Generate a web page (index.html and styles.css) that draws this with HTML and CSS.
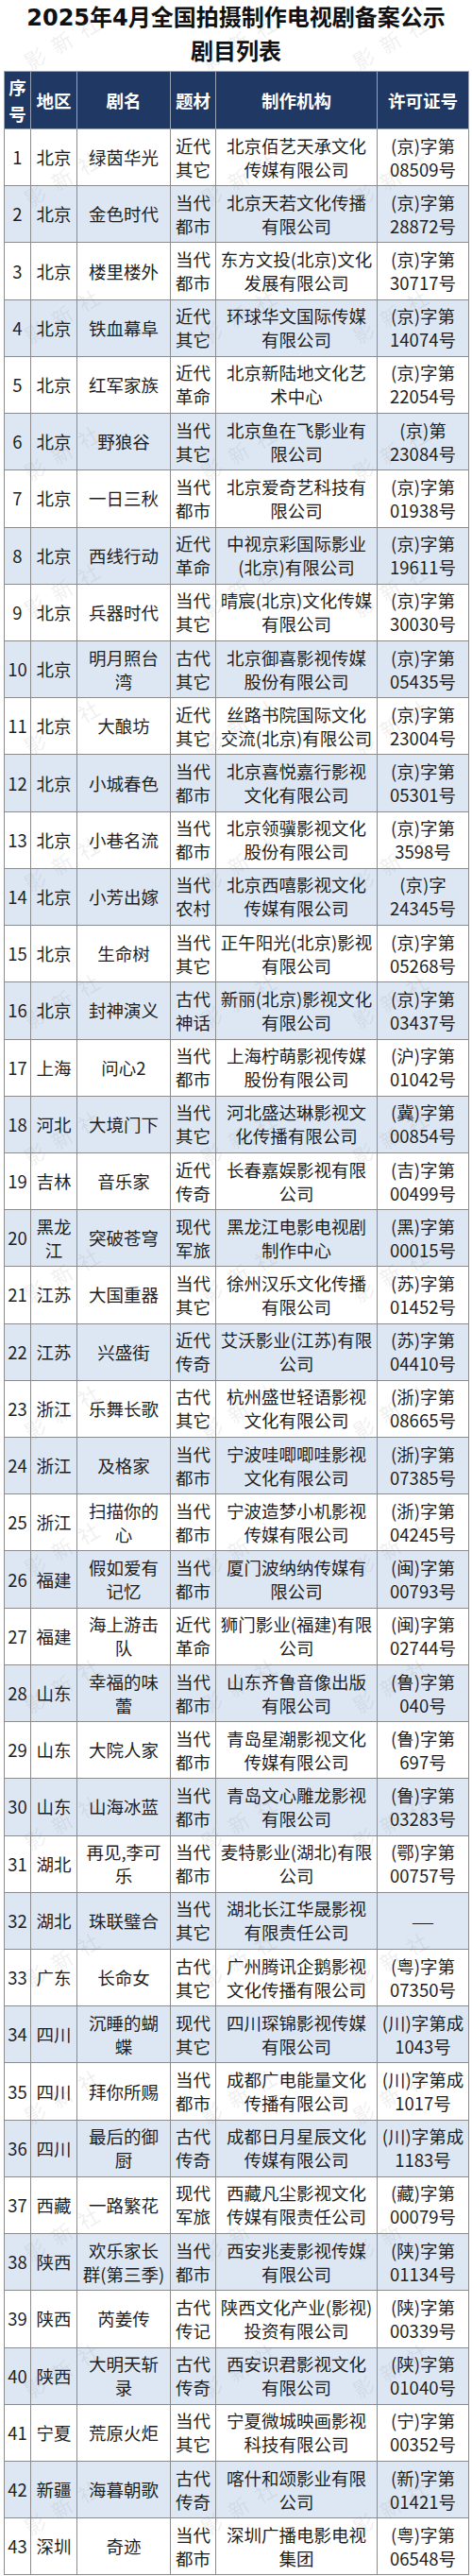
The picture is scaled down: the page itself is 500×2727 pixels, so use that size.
FILE: index.html
```html
<!DOCTYPE html>
<html lang="zh-CN">
<head>
<meta charset="utf-8">
<title>2025年4月全国拍摄制作电视剧备案公示剧目列表</title>
<link rel="stylesheet" href="styles.css">
</head>
<body>
<div class="page">
  <h1 class="title"><span class="num">2025</span>年<span class="num">4</span>月全国拍摄制作电视剧备案公示<br>剧目列表</h1>
  <table class="list">
    <colgroup>
      <col class="c-no"><col class="c-area"><col class="c-name"><col class="c-type"><col class="c-org"><col class="c-lic">
    </colgroup>
    <thead>
      <tr><th>序<br>号</th><th>地区</th><th>剧名</th><th>题材</th><th>制作机构</th><th>许可证号</th></tr>
    </thead>
    <tbody>
      <tr><td>1</td><td>北京</td><td>绿茵华光</td><td>近代<br>其它</td><td>北京佰艺天承文化<br>传媒有限公司</td><td>(京)字第<br>08509号</td></tr>
      <tr><td>2</td><td>北京</td><td>金色时代</td><td>当代<br>都市</td><td>北京天若文化传播<br>有限公司</td><td>(京)字第<br>28872号</td></tr>
      <tr><td>3</td><td>北京</td><td>楼里楼外</td><td>当代<br>都市</td><td>东方文投(北京)文化<br>发展有限公司</td><td>(京)字第<br>30717号</td></tr>
      <tr><td>4</td><td>北京</td><td>铁血幕阜</td><td>近代<br>其它</td><td>环球华文国际传媒<br>有限公司</td><td>(京)字第<br>14074号</td></tr>
      <tr><td>5</td><td>北京</td><td>红军家族</td><td>近代<br>革命</td><td>北京新陆地文化艺<br>术中心</td><td>(京)字第<br>22054号</td></tr>
      <tr><td>6</td><td>北京</td><td>野狼谷</td><td>当代<br>其它</td><td>北京鱼在飞影业有<br>限公司</td><td>(京)第<br>23084号</td></tr>
      <tr><td>7</td><td>北京</td><td>一日三秋</td><td>当代<br>都市</td><td>北京爱奇艺科技有<br>限公司</td><td>(京)字第<br>01938号</td></tr>
      <tr><td>8</td><td>北京</td><td>西线行动</td><td>近代<br>革命</td><td>中视京彩国际影业<br>(北京)有限公司</td><td>(京)字第<br>19611号</td></tr>
      <tr><td>9</td><td>北京</td><td>兵器时代</td><td>当代<br>其它</td><td>晴宸(北京)文化传媒<br>有限公司</td><td>(京)字第<br>30030号</td></tr>
      <tr><td>10</td><td>北京</td><td>明月照台<br>湾</td><td>古代<br>其它</td><td>北京御喜影视传媒<br>股份有限公司</td><td>(京)字第<br>05435号</td></tr>
      <tr><td>11</td><td>北京</td><td>大酿坊</td><td>近代<br>其它</td><td>丝路书院国际文化<br>交流(北京)有限公司</td><td>(京)字第<br>23004号</td></tr>
      <tr><td>12</td><td>北京</td><td>小城春色</td><td>当代<br>都市</td><td>北京喜悦嘉行影视<br>文化有限公司</td><td>(京)字第<br>05301号</td></tr>
      <tr><td>13</td><td>北京</td><td>小巷名流</td><td>当代<br>都市</td><td>北京领骥影视文化<br>股份有限公司</td><td>(京)字第<br>3598号</td></tr>
      <tr><td>14</td><td>北京</td><td>小芳出嫁</td><td>当代<br>农村</td><td>北京西嘻影视文化<br>传媒有限公司</td><td>(京)字<br>24345号</td></tr>
      <tr><td>15</td><td>北京</td><td>生命树</td><td>当代<br>其它</td><td>正午阳光(北京)影视<br>有限公司</td><td>(京)字第<br>05268号</td></tr>
      <tr><td>16</td><td>北京</td><td>封神演义</td><td>古代<br>神话</td><td>新丽(北京)影视文化<br>有限公司</td><td>(京)字第<br>03437号</td></tr>
      <tr><td>17</td><td>上海</td><td>问心2</td><td>当代<br>都市</td><td>上海柠萌影视传媒<br>股份有限公司</td><td>(沪)字第<br>01042号</td></tr>
      <tr><td>18</td><td>河北</td><td>大境门下</td><td>当代<br>其它</td><td>河北盛达琳影视文<br>化传播有限公司</td><td>(冀)字第<br>00854号</td></tr>
      <tr><td>19</td><td>吉林</td><td>音乐家</td><td>近代<br>传奇</td><td>长春嘉娱影视有限<br>公司</td><td>(吉)字第<br>00499号</td></tr>
      <tr><td>20</td><td>黑龙<br>江</td><td>突破苍穹</td><td>现代<br>军旅</td><td>黑龙江电影电视剧<br>制作中心</td><td>(黑)字第<br>00015号</td></tr>
      <tr><td>21</td><td>江苏</td><td>大国重器</td><td>当代<br>其它</td><td>徐州汉乐文化传播<br>有限公司</td><td>(苏)字第<br>01452号</td></tr>
      <tr><td>22</td><td>江苏</td><td>兴盛街</td><td>近代<br>传奇</td><td>艾沃影业(江苏)有限<br>公司</td><td>(苏)字第<br>04410号</td></tr>
      <tr><td>23</td><td>浙江</td><td>乐舞长歌</td><td>古代<br>其它</td><td>杭州盛世轻语影视<br>文化有限公司</td><td>(浙)字第<br>08665号</td></tr>
      <tr><td>24</td><td>浙江</td><td>及格家</td><td>当代<br>都市</td><td>宁波哇唧唧哇影视<br>文化有限公司</td><td>(浙)字第<br>07385号</td></tr>
      <tr><td>25</td><td>浙江</td><td>扫描你的<br>心</td><td>当代<br>都市</td><td>宁波造梦小机影视<br>传媒有限公司</td><td>(浙)字第<br>04245号</td></tr>
      <tr><td>26</td><td>福建</td><td>假如爱有<br>记忆</td><td>当代<br>都市</td><td>厦门波纳纳传媒有<br>限公司</td><td>(闽)字第<br>00793号</td></tr>
      <tr><td>27</td><td>福建</td><td>海上游击<br>队</td><td>近代<br>革命</td><td>狮门影业(福建)有限<br>公司</td><td>(闽)字第<br>02744号</td></tr>
      <tr><td>28</td><td>山东</td><td>幸福的味<br>蕾</td><td>当代<br>都市</td><td>山东齐鲁音像出版<br>有限公司</td><td>(鲁)字第<br>040号</td></tr>
      <tr><td>29</td><td>山东</td><td>大院人家</td><td>当代<br>都市</td><td>青岛星潮影视文化<br>传媒有限公司</td><td>(鲁)字第<br>697号</td></tr>
      <tr><td>30</td><td>山东</td><td>山海冰蓝</td><td>当代<br>都市</td><td>青岛文心雕龙影视<br>有限公司</td><td>(鲁)字第<br>03283号</td></tr>
      <tr><td>31</td><td>湖北</td><td>再见,李可<br>乐</td><td>当代<br>都市</td><td>麦特影业(湖北)有限<br>公司</td><td>(鄂)字第<br>00757号</td></tr>
      <tr><td>32</td><td>湖北</td><td>珠联璧合</td><td>当代<br>其它</td><td>湖北长江华晟影视<br>有限责任公司</td><td><span class="dash">——</span></td></tr>
      <tr><td>33</td><td>广东</td><td>长命女</td><td>古代<br>其它</td><td>广州腾讯企鹅影视<br>文化传播有限公司</td><td>(粤)字第<br>07350号</td></tr>
      <tr><td>34</td><td>四川</td><td>沉睡的蝴<br>蝶</td><td>现代<br>其它</td><td>四川琛锦影视传媒<br>有限公司</td><td>(川)字第成<br>1043号</td></tr>
      <tr><td>35</td><td>四川</td><td>拜你所赐</td><td>当代<br>都市</td><td>成都广电能量文化<br>传播有限公司</td><td>(川)字第成<br>1017号</td></tr>
      <tr><td>36</td><td>四川</td><td>最后的御<br>厨</td><td>古代<br>传奇</td><td>成都日月星辰文化<br>传媒有限公司</td><td>(川)字第成<br>1183号</td></tr>
      <tr><td>37</td><td>西藏</td><td>一路繁花</td><td>现代<br>军旅</td><td>西藏凡尘影视文化<br>传媒有限责任公司</td><td>(藏)字第<br>00079号</td></tr>
      <tr><td>38</td><td>陕西</td><td>欢乐家长<br>群(第三季)</td><td>当代<br>都市</td><td>西安兆麦影视传媒<br>有限公司</td><td>(陕)字第<br>01134号</td></tr>
      <tr><td>39</td><td>陕西</td><td>芮姜传</td><td>古代<br>传记</td><td>陕西文化产业(影视)<br>投资有限公司</td><td>(陕)字第<br>00339号</td></tr>
      <tr><td>40</td><td>陕西</td><td>大明天斩<br>录</td><td>古代<br>传奇</td><td>西安识君影视文化<br>有限公司</td><td>(陕)字第<br>01040号</td></tr>
      <tr><td>41</td><td>宁夏</td><td>荒原火炬</td><td>当代<br>其它</td><td>宁夏微城映画影视<br>科技有限公司</td><td>(宁)字第<br>00352号</td></tr>
      <tr><td>42</td><td>新疆</td><td>海暮朝歌</td><td>古代<br>传奇</td><td>喀什和颂影业有限<br>公司</td><td>(新)字第<br>01421号</td></tr>
      <tr><td>43</td><td>深圳</td><td>奇迹</td><td>当代<br>都市</td><td>深圳广播电影电视<br>集团</td><td>(粤)字第<br>06548号</td></tr>
    </tbody>
  </table>
  <div class="watermarks" aria-hidden="true">
    <span>影新社</span><span>影新社</span><span>影新社</span>
    <span>影新社</span><span>影新社</span><span>影新社</span>
    <span>影新社</span><span>影新社</span><span>影新社</span>
    <span>影新社</span><span>影新社</span><span>影新社</span>
    <span>影新社</span><span>影新社</span><span>影新社</span>
    <span>影新社</span><span>影新社</span><span>影新社</span>
    <span>影新社</span><span>影新社</span><span>影新社</span>
    <span>影新社</span><span>影新社</span><span>影新社</span>
    <span>影新社</span><span>影新社</span><span>影新社</span>
    <span>影新社</span><span>影新社</span><span>影新社</span>
    <span>影新社</span><span>影新社</span><span>影新社</span>
    <span>影新社</span><span>影新社</span><span>影新社</span>
    <span>影新社</span><span>影新社</span><span>影新社</span>
    <span>影新社</span><span>影新社</span><span>影新社</span>
    <span>影新社</span><span>影新社</span><span>影新社</span>
    <span>影新社</span><span>影新社</span><span>影新社</span>
    <span>影新社</span><span>影新社</span><span>影新社</span>
    <span>影新社</span><span>影新社</span><span>影新社</span>
    <span>影新社</span><span>影新社</span><span>影新社</span>
  </div>
</div>
</body>
</html>
```
FILE: styles.css
```css
html, body {
  margin: 0;
  padding: 0;
  background: #ffffff;
}
body {
  font-family: "Noto Sans CJK SC", "Noto Sans", sans-serif;
  color: #1f1f1f;
}
.page {
  position: relative;
  width: 500px;
  min-height: 2727px;
  overflow: hidden;
}
.title {
  margin: 0;
  font-size: 24px;
  line-height: 34px;
  font-weight: 700;
  text-align: center;
  color: #111111;
}
.title .num {
  font-family: "DejaVu Sans", "Noto Sans CJK SC", sans-serif;
}
.list {
  margin: 5px 4px 0;
  width: 492px;
  border-collapse: collapse;
  table-layout: fixed;
}
.c-no { width: 28px; }
.c-area { width: 49px; }
.c-name { width: 99px; }
.c-type { width: 48px; }
.c-org { width: 171px; }
.c-lic { width: 97px; }
.list th {
  height: 60px;
  padding: 0;
  background: #1f3864;
  color: #ffffff;
  font-size: 18.5px;
  line-height: 28px;
  font-weight: 700;
  border: 1px solid #9aa3b3;
  text-align: center;
  vertical-align: middle;
}
.list tbody tr {
  height: 60.23px;
}
.list td {
  padding: 0;
  font-size: 18.5px;
  line-height: 25px;
  text-align: center;
  vertical-align: middle;
  border: 1px solid #8c8c8c;
  white-space: nowrap;
}
.list tbody tr:nth-child(even) td {
  background: #dde7f4;
}
.dash {
  font-size: 14px;
  letter-spacing: 0;
}
.watermarks {
  position: absolute;
  left: 0;
  top: -32px;
  width: 500px;
  display: grid;
  grid-template-columns: 140px 234px 86px;
  grid-auto-rows: 145px;
  pointer-events: none;
}
.watermarks span {
  align-self: center;
  justify-self: center;
  font-size: 22px;
  letter-spacing: 11px;
  white-space: nowrap;
  color: rgba(120, 120, 120, 0.12);
  transform: rotate(-31deg);
}
```
